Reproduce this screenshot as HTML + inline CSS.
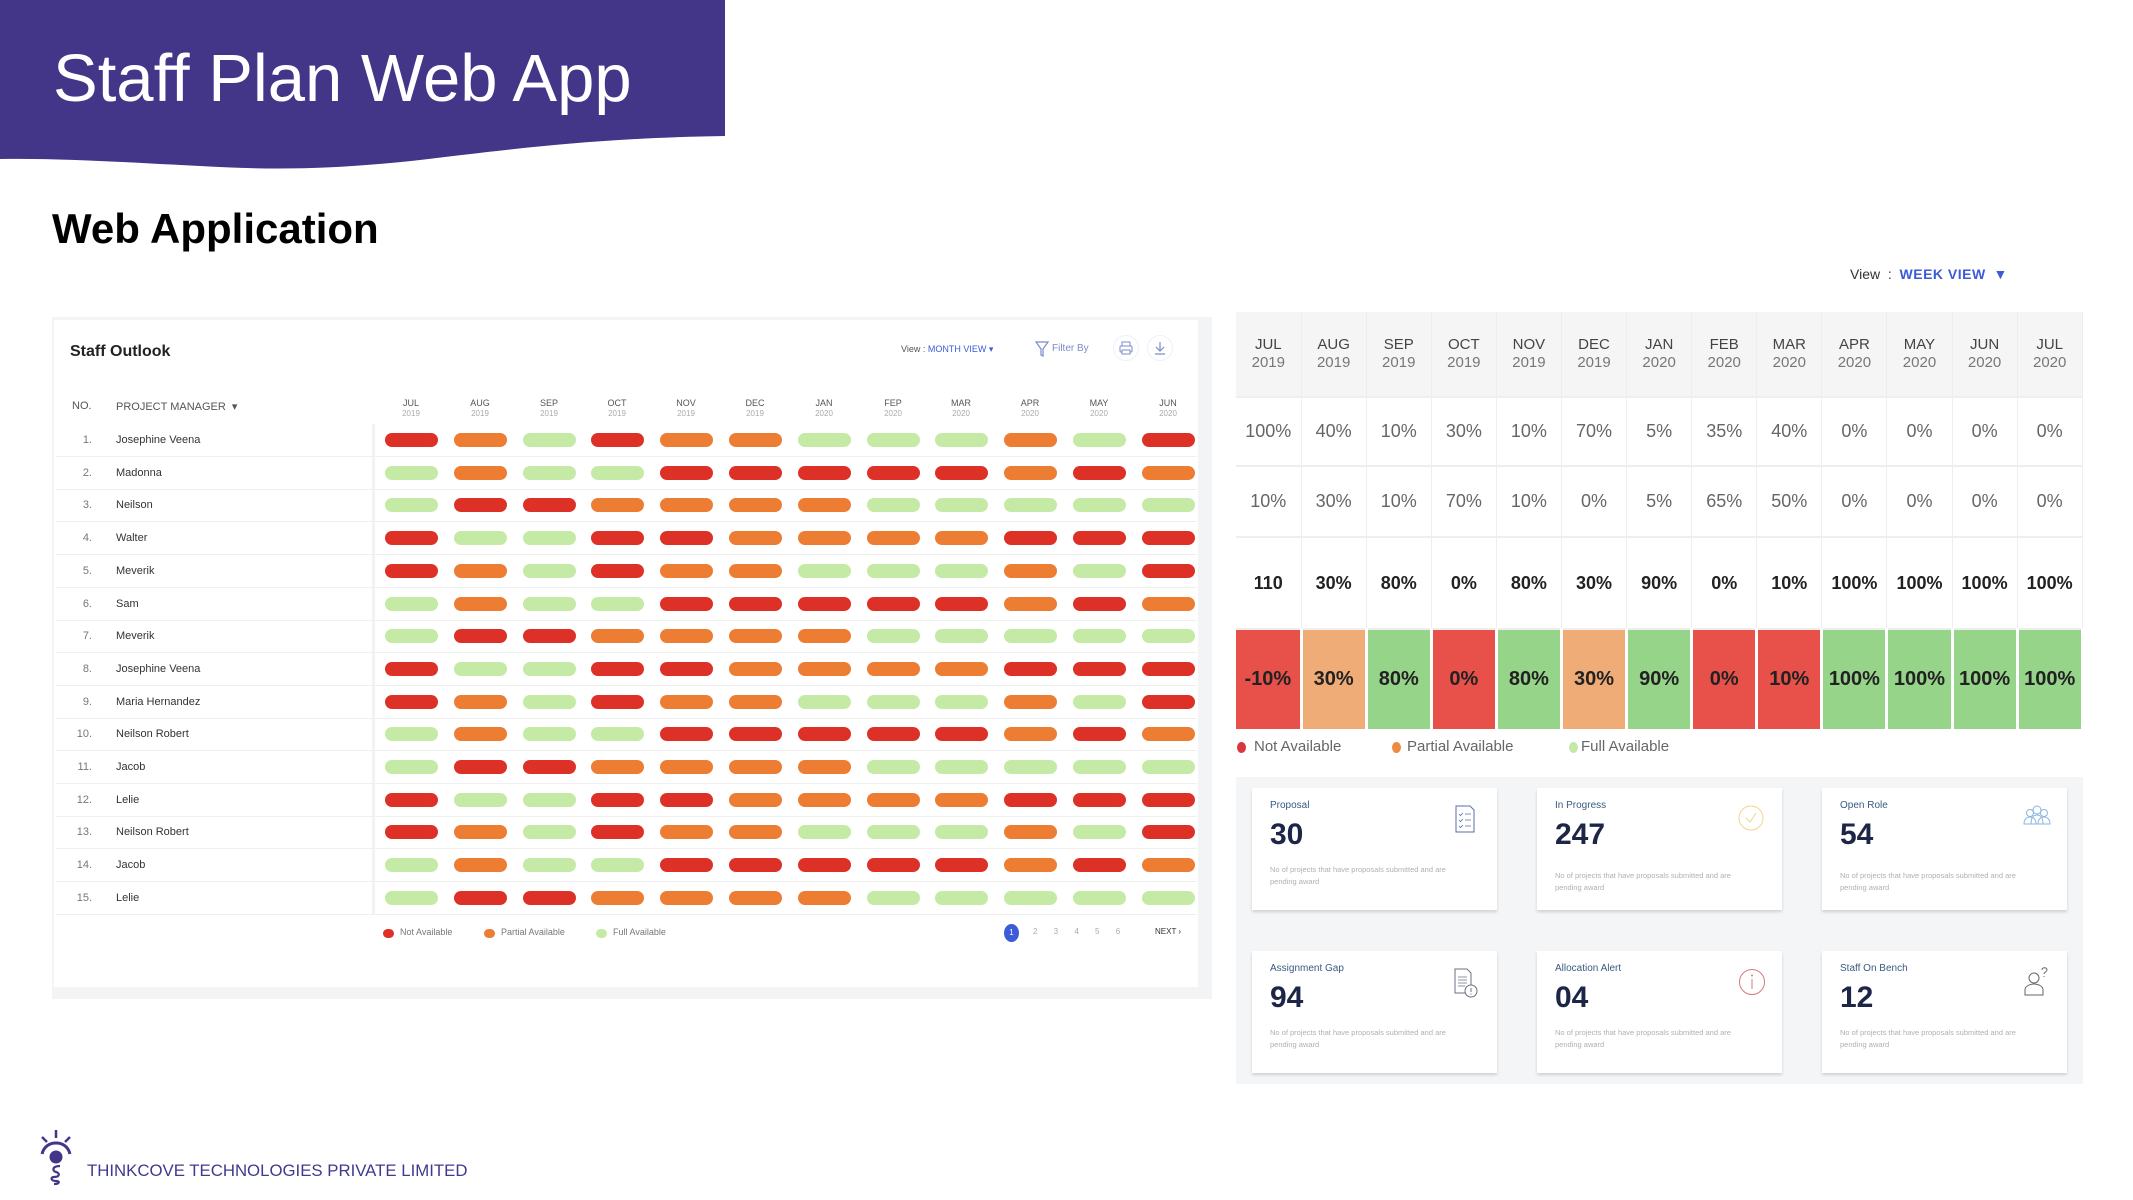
<!DOCTYPE html>
<html><head><meta charset="utf-8"><style>
*{margin:0;padding:0;box-sizing:border-box}
body{width:2133px;height:1200px;background:#fff;position:relative;overflow:hidden;font-family:"Liberation Sans",sans-serif}
.a{position:absolute}
.t{position:absolute;white-space:nowrap}
.pill{position:absolute;width:53px;height:14px;border-radius:7px}
.r{background:#dd3128}.o{background:#ee7d34}.g{background:#c5eaa6}
.row{position:absolute;left:56px;width:1141px;height:1px;background:#f0f0f0}
.name{position:absolute;left:116px;font-size:11px;color:#333;transform:translateY(-50%)}
.no{position:absolute;left:72px;width:20px;text-align:right;font-size:11px;color:#777;transform:translateY(-50%)}
.mh{position:absolute;width:70px;text-align:center;font-size:9px;color:#555;line-height:10px}
.mh span{color:#aaa;font-size:8px}
table.rt{position:absolute;left:1236px;top:312px;border-collapse:collapse;table-layout:fixed;width:846px}
.rt td{width:65.1px;text-align:center;border-right:1px solid #eee;border-bottom:2px solid #eee}
.rt tr.h td{height:85px;background:#f5f5f5;font-size:15px;color:#444;line-height:18px}
.rt tr.h td span{color:#777}
.rt tr.p1 td{height:69px;font-size:18px;color:#666}
.rt tr.p2 td{height:71px;font-size:18px;color:#666}
.rt tr.b td{height:92px;font-size:18px;color:#222;font-weight:bold}
.rt tr.c td{height:100px;font-size:20px;color:#222;font-weight:bold;border-right:3px solid #fff;border-bottom:none}
.R{background:#e8514a}.O{background:#f0ac77}.G{background:#96d48a}
.card{position:absolute;width:245px;height:122px;background:#fff;box-shadow:0 2px 3px rgba(0,0,0,.15)}
.card .l{position:absolute;left:18px;top:12px;font-size:10px;color:#3a5a80}
.card .n{position:absolute;left:18px;top:30px;font-size:30px;font-weight:bold;color:#1d2646}
.card .d{position:absolute;left:18px;top:76px;font-size:7.5px;color:#b0b0b0;line-height:12px;width:200px}
.card svg{position:absolute;left:200px;top:16px}
</style></head><body>

<svg class="a" style="left:0;top:0" width="725" height="172"><path d="M0 0H725V136C600 138 520 148 420 160C330 170 270 170 200 166C120 162 60 158 0 159Z" fill="#433689"/></svg>
<div class="t" style="left:53px;top:40px;font-size:67px;color:#fff">Staff Plan Web App</div>
<div class="t" style="left:52px;top:205px;font-size:42px;font-weight:bold;color:#000">Web Application</div>

<!-- left panel -->
<div class="a" style="left:52px;top:317px;width:1160px;height:682px;background:#f3f4f6"></div>
<div class="a" style="left:54px;top:320px;width:1144px;height:667px;background:#fff"></div>
<div class="t" style="left:70px;top:343px;font-size:16px;font-weight:bold;color:#222">Staff Outlook</div>
<div class="t" style="left:901px;top:344px;font-size:9px;color:#555">View : <span style="color:#3d5bd9">MONTH VIEW ▾</span></div>
<svg class="a" style="left:1034px;top:340px" width="16" height="18"><path d="M2 2H14L9 9V16L7 15V9Z" fill="none" stroke="#7a8cc8" stroke-width="1.2"/></svg>
<div class="t" style="left:1052px;top:343px;font-size:10px;color:#7a8cc8">Filter By</div>
<div class="a" style="left:1113px;top:335px;width:26px;height:26px;border-radius:50%;border:1px solid #eef"></div>
<svg class="a" style="left:1119px;top:341px" width="14" height="14"><rect x="3" y="1" width="8" height="4" fill="none" stroke="#7a8cc8"/><rect x="1" y="5" width="12" height="6" rx="1" fill="none" stroke="#7a8cc8"/><rect x="3" y="9" width="8" height="4" fill="#fff" stroke="#7a8cc8"/></svg>
<div class="a" style="left:1147px;top:335px;width:26px;height:26px;border-radius:50%;border:1px solid #eef"></div>
<svg class="a" style="left:1153px;top:341px" width="14" height="14"><path d="M7 1V10M3 6L7 10L11 6M2 13H12" fill="none" stroke="#7a8cc8" stroke-width="1.2"/></svg>

<div class="t" style="left:72px;top:400px;font-size:11px;color:#555">NO.</div>
<div class="t" style="left:116px;top:400px;font-size:11px;color:#555">PROJECT MANAGER &nbsp;▾</div>
<div class="mh" style="left:376px;top:398px">JUL<br><span>2019</span></div>
<div class="mh" style="left:445px;top:398px">AUG<br><span>2019</span></div>
<div class="mh" style="left:514px;top:398px">SEP<br><span>2019</span></div>
<div class="mh" style="left:582px;top:398px">OCT<br><span>2019</span></div>
<div class="mh" style="left:651px;top:398px">NOV<br><span>2019</span></div>
<div class="mh" style="left:720px;top:398px">DEC<br><span>2019</span></div>
<div class="mh" style="left:789px;top:398px">JAN<br><span>2020</span></div>
<div class="mh" style="left:858px;top:398px">FEP<br><span>2020</span></div>
<div class="mh" style="left:926px;top:398px">MAR<br><span>2020</span></div>
<div class="mh" style="left:995px;top:398px">APR<br><span>2020</span></div>
<div class="mh" style="left:1064px;top:398px">MAY<br><span>2020</span></div>
<div class="mh" style="left:1133px;top:398px">JUN<br><span>2020</span></div>
<div class="a" style="left:372px;top:424px;width:3px;height:491px;background:#f2f2f2"></div>

<div class="no" style="top:440px">1.</div><div class="name" style="top:440px">Josephine Veena</div>
<div class="no" style="top:473px">2.</div><div class="name" style="top:473px">Madonna</div>
<div class="no" style="top:505px">3.</div><div class="name" style="top:505px">Neilson</div>
<div class="no" style="top:538px">4.</div><div class="name" style="top:538px">Walter</div>
<div class="no" style="top:571px">5.</div><div class="name" style="top:571px">Meverik</div>
<div class="no" style="top:604px">6.</div><div class="name" style="top:604px">Sam</div>
<div class="no" style="top:636px">7.</div><div class="name" style="top:636px">Meverik</div>
<div class="no" style="top:669px">8.</div><div class="name" style="top:669px">Josephine Veena</div>
<div class="no" style="top:702px">9.</div><div class="name" style="top:702px">Maria Hernandez</div>
<div class="no" style="top:734px">10.</div><div class="name" style="top:734px">Neilson Robert</div>
<div class="no" style="top:767px">11.</div><div class="name" style="top:767px">Jacob</div>
<div class="no" style="top:800px">12.</div><div class="name" style="top:800px">Lelie</div>
<div class="no" style="top:832px">13.</div><div class="name" style="top:832px">Neilson Robert</div>
<div class="no" style="top:865px">14.</div><div class="name" style="top:865px">Jacob</div>
<div class="no" style="top:898px">15.</div><div class="name" style="top:898px">Lelie</div>
<div id="pills"></div>

<div class="a" style="left:383px;top:929px;width:11px;height:9px;border-radius:5px;background:#dd3128"></div>
<div class="t" style="left:400px;top:927px;font-size:9px;color:#777">Not Available</div>
<div class="a" style="left:484px;top:929px;width:11px;height:9px;border-radius:5px;background:#ee7d34"></div>
<div class="t" style="left:501px;top:927px;font-size:9px;color:#777">Partial Available</div>
<div class="a" style="left:596px;top:929px;width:11px;height:9px;border-radius:5px;background:#c5eaa6"></div>
<div class="t" style="left:613px;top:927px;font-size:9px;color:#777">Full Available</div>
<div class="a" style="left:1004px;top:924px;width:15px;height:18px;border-radius:50%;background:#3d5bd9;color:#fff;font-size:8px;text-align:center;line-height:18px">1</div>
<div class="t" style="left:1033px;top:927px;font-size:8px;color:#aaa;word-spacing:14px">2 3 4 5 6</div>
<div class="t" style="left:1155px;top:927px;font-size:8px;color:#333">NEXT ›</div>

<!-- right -->
<div class="t" style="left:1850px;top:266px;font-size:14px;color:#333">View &nbsp;: &nbsp;<span style="color:#3d5bd9;font-weight:bold;letter-spacing:.5px">WEEK VIEW</span> &nbsp;<span style="color:#3d5bd9">▼</span></div>
<table class="rt">
<tr class="h"><td>JUL<br><span>2019</span></td><td>AUG<br><span>2019</span></td><td>SEP<br><span>2019</span></td><td>OCT<br><span>2019</span></td><td>NOV<br><span>2019</span></td><td>DEC<br><span>2019</span></td><td>JAN<br><span>2020</span></td><td>FEB<br><span>2020</span></td><td>MAR<br><span>2020</span></td><td>APR<br><span>2020</span></td><td>MAY<br><span>2020</span></td><td>JUN<br><span>2020</span></td><td>JUL<br><span>2020</span></td></tr>
<tr class="p1"><td>100%</td><td>40%</td><td>10%</td><td>30%</td><td>10%</td><td>70%</td><td>5%</td><td>35%</td><td>40%</td><td>0%</td><td>0%</td><td>0%</td><td>0%</td></tr>
<tr class="p2"><td>10%</td><td>30%</td><td>10%</td><td>70%</td><td>10%</td><td>0%</td><td>5%</td><td>65%</td><td>50%</td><td>0%</td><td>0%</td><td>0%</td><td>0%</td></tr>
<tr class="b"><td>110</td><td>30%</td><td>80%</td><td>0%</td><td>80%</td><td>30%</td><td>90%</td><td>0%</td><td>10%</td><td>100%</td><td>100%</td><td>100%</td><td>100%</td></tr>
<tr class="c"><td class="R">-10%</td><td class="O">30%</td><td class="G">80%</td><td class="R">0%</td><td class="G">80%</td><td class="O">30%</td><td class="G">90%</td><td class="R">0%</td><td class="R">10%</td><td class="G">100%</td><td class="G">100%</td><td class="G">100%</td><td class="G">100%</td></tr>
</table>
<div class="a" style="left:1237px;top:742px;width:9px;height:11px;border-radius:50%;background:#d9363e"></div>
<div class="t" style="left:1254px;top:738px;font-size:15px;color:#666">Not Available</div>
<div class="a" style="left:1392px;top:742px;width:9px;height:11px;border-radius:50%;background:#ee8a45"></div>
<div class="t" style="left:1407px;top:738px;font-size:15px;color:#666">Partial Available</div>
<div class="a" style="left:1569px;top:742px;width:9px;height:11px;border-radius:50%;background:#c3e8a8"></div>
<div class="t" style="left:1581px;top:738px;font-size:15px;color:#666">Full Available</div>

<div class="a" style="left:1236px;top:777px;width:847px;height:307px;background:#f4f5f7"></div>
<div class="card" style="left:1252px;top:788px"><div class="l">Proposal</div><div class="n">30</div><div class="d">No of projects that have proposals submitted and are pending award</div>
<svg width="26" height="30"><path d="M4 2H18L22 6V28H4Z" fill="none" stroke="#5b6fa8"/><path d="M7 10L8.5 11.5L11 9M13 10H19M7 16L8.5 17.5L11 15M13 16H19M7 22L8.5 23.5L11 21M13 22H19" fill="none" stroke="#5b6fa8" stroke-width=".8"/></svg></div>
<div class="card" style="left:1537px;top:788px"><div class="l">In Progress</div><div class="n">247</div><div class="d" style="top:82px">No of projects that have proposals submitted and are pending award</div>
<svg width="28" height="28"><circle cx="14" cy="14" r="12" fill="none" stroke="#f0d58a"/><path d="M9 14L13 18L19 9" fill="none" stroke="#f0d58a"/></svg></div>
<div class="card" style="left:1822px;top:788px"><div class="l">Open Role</div><div class="n">54</div><div class="d" style="top:82px">No of projects that have proposals submitted and are pending award</div>
<svg width="30" height="22"><circle cx="15" cy="6" r="4" fill="none" stroke="#8ab4e0"/><circle cx="8" cy="9" r="3.5" fill="none" stroke="#8ab4e0"/><circle cx="22" cy="9" r="3.5" fill="none" stroke="#8ab4e0"/><path d="M2 20C2 14 6 13 8 13C10 13 14 14 14 20ZM16 20C16 14 20 13 22 13C24 13 28 14 28 20ZM9 20C9 12 13 11 15 11C17 11 21 12 21 20Z" fill="#fff" stroke="#8ab4e0"/></svg></div>
<div class="card" style="left:1252px;top:951px"><div class="l">Assignment Gap</div><div class="n">94</div><div class="d">No of projects that have proposals submitted and are pending award</div>
<svg width="28" height="32"><path d="M3 2H15L19 6V26H3Z" fill="none" stroke="#6a7080"/><path d="M6 10H15M6 13H15M6 16H15M6 19H13" stroke="#6a7080" stroke-width=".8"/><circle cx="19" cy="24" r="6" fill="#fff" stroke="#6a7080"/><path d="M19 21V25M19 26.5V27.5" stroke="#6a7080"/></svg></div>
<div class="card" style="left:1537px;top:951px"><div class="l">Allocation Alert</div><div class="n">04</div><div class="d">No of projects that have proposals submitted and are pending award</div>
<svg width="30" height="30"><circle cx="15" cy="15" r="12.5" fill="none" stroke="#d7787c"/><path d="M15 12V22" stroke="#d7787c"/><circle cx="15" cy="8.5" r="1" fill="#d7787c"/></svg></div>
<div class="card" style="left:1822px;top:951px"><div class="l">Staff On Bench</div><div class="n">12</div><div class="d">No of projects that have proposals submitted and are pending award</div>
<svg width="30" height="32" style="top:14px"><circle cx="12" cy="13" r="5" fill="none" stroke="#666"/><path d="M3 30V25C3 21 8 19 12 19C16 19 21 21 21 25V30Z" fill="none" stroke="#666"/><path d="M20 5C20 2 25 2 25 5C25 7 22 7 22 9M22 11V12" fill="none" stroke="#666"/></svg></div>

<!-- footer -->
<svg class="a" style="left:34px;top:1128px" width="44" height="60"><path d="M22 2V10M8 9L13 14M36 9L31 14" stroke="#433689" stroke-width="2.5"/><path d="M8 26C10 18 16 15 22 15C28 15 34 18 36 26" fill="none" stroke="#433689" stroke-width="3"/><circle cx="22" cy="29" r="6.5" fill="#433689"/><path d="M26 38C18 38 18 43 22 44C26 45 26 49 20 49C16 49 17 53 22 53C26 53 26 56 20 56" fill="none" stroke="#433689" stroke-width="2.2"/></svg>
<div class="t" style="left:87px;top:1161px;font-size:16.8px;color:#403a8e">THINKCOVE TECHNOLOGIES PRIVATE LIMITED</div>

<script>
var P=["rogroogggogr","goggrrrrroro","grroooogggggg","rggrroooorrr"];
var h="";
for(var i=0;i<15;i++){var s=P[i%4],y=440+i*32.7;
 h+='<div class="row" style="top:'+(y+16)+'px"></div>';
 for(var j=0;j<12;j++){h+='<div class="pill '+s[j]+'" style="left:'+(385+j*68.8)+'px;top:'+(y-7)+'px"></div>';}}
document.getElementById("pills").innerHTML=h;
</script>
</body></html>
